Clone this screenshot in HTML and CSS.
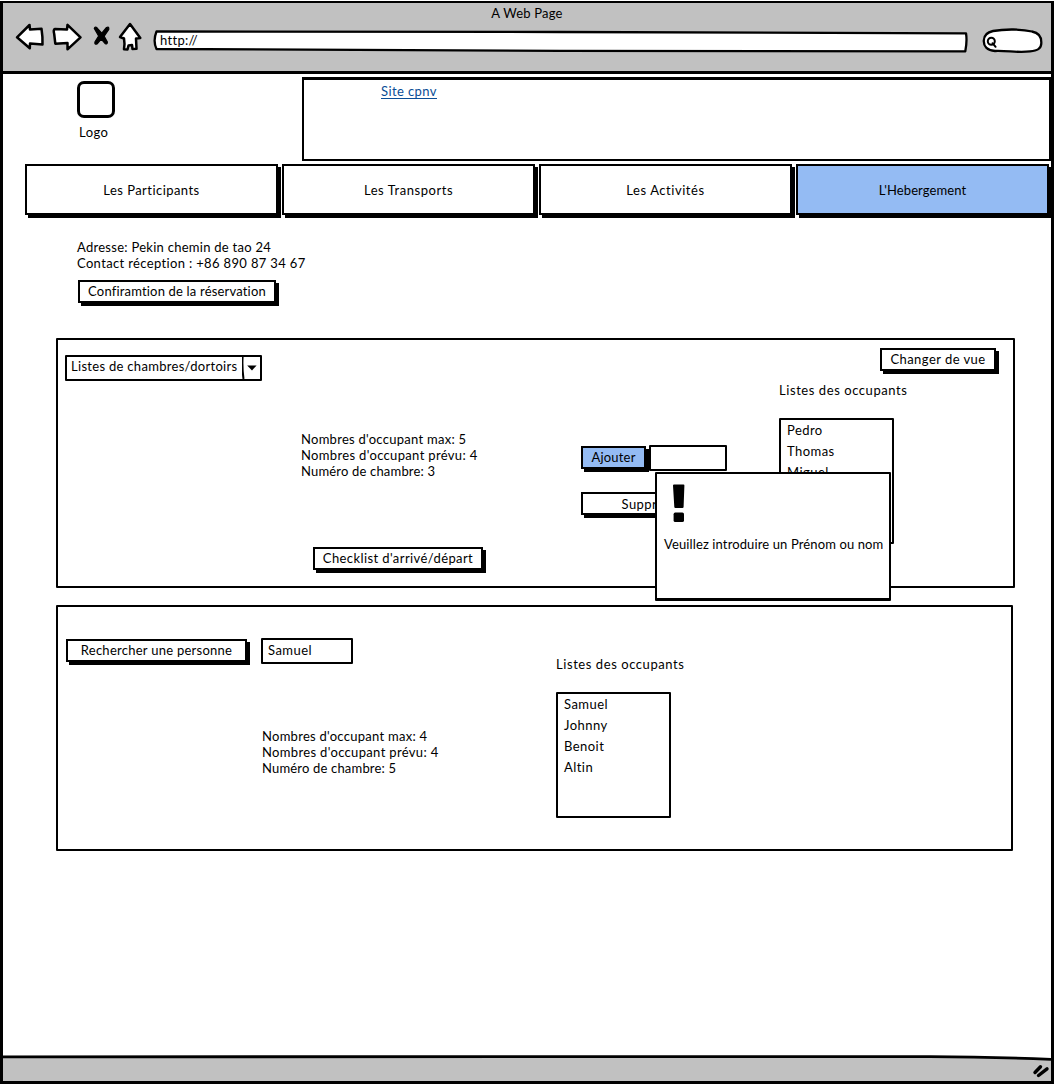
FILE: index.html
```html
<!DOCTYPE html>
<html lang="fr">
<head>
<meta charset="utf-8">
<title>A Web Page</title>
<link rel="stylesheet" href="styles.css">
</head>
<body>
<div class="window">
  <header class="chrome">
    <div class="chrome-title">A Web Page</div>
    <div class="chrome-bar">
      <svg class="nav-icons" width="130" height="32" viewBox="14 21 130 32" fill="#fff" stroke="#000" stroke-width="2.5" stroke-linejoin="round" stroke-linecap="round">
        <path d="M17 37.3 L29.5 25 L30 29.5 L41.5 28.7 Q42.8 37 42.5 44.5 L30 43.5 L29.8 48.3 Z"/>
        <path d="M80.5 37.3 L67.5 24.8 L67 29.5 L55 29 Q53 29.5 54.2 34 L55.3 43.7 L67.5 43 L67.5 49.3 Z"/>
        <path d="M130 24 L120 37 L124 38.5 Q125 44 124 49.3 L127.5 49.4 L128.5 45.5 L132 45 L132.5 49 L136.5 48.8 L136 38.5 L140.3 38 Z"/>
        <path d="M94.3 28.5 Q95 26 97.4 28.3 L101.8 33.2 L106.5 27.5 Q109.2 26 108.8 29.3 L104.2 36.2 L107.4 42 Q107.3 45 105 43.4 L101.2 39 L97.4 43.6 Q94.4 45.2 94.9 42 L98.6 36 Z" fill="#000" stroke-width="1.2"/>
      </svg>
      <div class="address">
        <svg class="address-frame" width="816" height="24" viewBox="153 29 816 24" fill="#fff" stroke="#000" stroke-width="2.3" stroke-linejoin="round">
          <path d="M156.5 31.5 L560 32 L966 33.3 Q967.3 41 965.3 51.3 L560 50.8 L156.5 49 Q152.7 41 156.5 31.5 Z"/>
        </svg>
        <span class="address-text">http://</span>
      </div>
      <svg class="search" width="62" height="28" viewBox="982 27 62 28" fill="#fff" stroke="#000" stroke-width="2.3" stroke-linecap="round">
        <path d="M993 31 C1005 28.8 1022 29 1032 31.5 C1040 33 1041.5 38 1041.3 43 C1041.5 49 1037 50.5 1030 51.4 C1018 53 1008 50.5 995 51 C987 50.5 983.5 46 983.8 40.5 C984 35 988 32 993 31 Z"/>
        <circle cx="991.3" cy="41.3" r="3.5" stroke-width="2"/>
        <path d="M992.5 43.2 L995.6 46.8" stroke-width="2"/>
      </svg>
    </div>
  </header>

  <main class="page">
    <div class="top">
      <div class="logo">
        <div class="logo-box"></div>
        <span class="t-logo">Logo</span>
      </div>
      <div class="banner"><a class="link">Site cpnv</a></div>
    </div>

    <nav class="tabs">
      <div class="tab">Les Participants</div>
      <div class="tab tab-wide">Les Transports</div>
      <div class="tab tab-wide">Les Activités</div>
      <div class="tab tab-active">L'Hebergement</div>
    </nav>

    <section class="contact">
      <div class="t-address">Adresse: Pekin chemin de tao 24</div>
      <div class="t-phone">Contact réception : +86 890 87 34 67</div>
      <div class="btn btn-confirm">Confiramtion de la réservation</div>
    </section>

    <section class="panel panel-rooms">
      <div class="rooms-left">
        <div class="combo">
          <span class="combo-text">Listes de chambres/dortoirs</span>
          <svg class="combo-arrow" width="18" height="22" viewBox="0 0 18 22"><path d="M.6 0 Q0 11 1.5 22" fill="none" stroke="#000" stroke-width="2"/><path d="M5.2 8.4 L14.6 8.4 L10 13.6 Z"/></svg>
        </div>
        <div class="info info-rooms">
          <div class="t-max">Nombres d'occupant max: 5</div>
          <div class="t-plan">Nombres d'occupant prévu: 4</div>
          <div class="t-num">Numéro de chambre: 3</div>
        </div>
        <div class="btn btn-check">Checklist d'arrivé/départ</div>
      </div>
      <div class="rooms-actions">
        <div class="add-row">
          <div class="btn btn-add">Ajouter</div>
          <div class="field field-add"></div>
        </div>
        <div class="btn btn-remove">Supprimer</div>
      </div>
      <div class="rooms-right">
        <div class="btn btn-view">Changer de vue</div>
        <div class="t-list">Listes des occupants</div>
        <div class="list">
          <div>Pedro</div>
          <div>Thomas</div>
          <div>Miguel</div>
        </div>
      </div>
      <div class="popup">
        <svg class="bang" width="18" height="40" viewBox="0 0 18 40"><path d="M2 1.5 Q2 .5 3 .5 H12.5 Q13.5 .5 13.4 1.5 L12.6 23 Q12.5 24 11.5 24 H4.4 Q3.4 24 3.3 23 Z"/><rect x="2.6" y="28.6" width="10.4" height="9.4" rx="1.6"/></svg>
        <div class="t-popup">Veuillez introduire un Prénom ou nom</div>
      </div>
    </section>

    <section class="panel panel-search">
      <div class="search-left">
        <div class="search-row">
          <div class="btn btn-search">Rechercher une personne</div>
          <div class="field field-name">Samuel</div>
        </div>
        <div class="info info-search">
          <div class="t-max">Nombres d'occupant max: 4</div>
          <div class="t-plan">Nombres d'occupant prévu: 4</div>
          <div class="t-num">Numéro de chambre: 5</div>
        </div>
      </div>
      <div class="search-right">
        <div class="t-list">Listes des occupants</div>
        <div class="list">
          <div>Samuel</div>
          <div>Johnny</div>
          <div>Benoit</div>
          <div>Altin</div>
        </div>
      </div>
    </section>
  </main>

  <footer class="status">
    <svg width="1048" height="27" viewBox="3 1055 1048 27">
      <path d="M3 1057.8 L930 1057.6 Q990 1058 1051 1060.3 V1082 H3 Z" fill="#c1c1c1"/>
      <path d="M3 1057.8 L930 1057.6 Q990 1058 1051 1060.3" fill="none" stroke="#000" stroke-width="2.8"/>
      <path d="M1035 1073.5 L1040.5 1067.8 M1038.5 1076.5 L1047 1069.8" stroke="#000" stroke-width="3.4" stroke-linecap="round"/>
    </svg>
  </footer>
</div>
</body>
</html>
```
FILE: styles.css
```css
* { box-sizing: border-box; }

body {
  margin: 0;
  background: #fff;
  color: #000;
  font: 13px/16px Lato, "Liberation Sans", sans-serif;
  letter-spacing: 0.45px;
  white-space: nowrap;
}

.window {
  display: flex;
  flex-direction: column;
  width: 1054px;
  height: 1083px;
  margin-top: 1px;
  border: 3px solid #000;
  border-top-width: 2px;
}

/* browser chrome */
.chrome {
  height: 71px;
  padding-top: 2px;
  background: #c1c1c1;
  border-bottom: 3px solid #000;
}
.chrome-title { text-align: center; letter-spacing: 0.2px; }
.chrome-bar { display: flex; align-items: flex-start; padding-left: 11px; }
.nav-icons { display: block; }
.address { display: grid; width: 816px; margin: 8px 0 0 9px; }
.address-frame { grid-area: 1 / 1; display: block; }
.address-text { grid-area: 1 / 1; padding: 3px 0 0 7px; letter-spacing: 0.3px; }
.search { display: block; margin: 6px 0 0 13px; }

.page { flex: 1; min-height: 0; }

/* logo and banner */
.top { display: flex; height: 90px; padding-top: 3px; }
.logo { width: 299px; padding: 4px 0 0 74px; }
.logo-box {
  width: 38px;
  height: 37px;
  margin-bottom: 6px;
  border: 3px solid #000;
  border-radius: 7px;
}
.t-logo { margin-left: 2px; }
.banner {
  flex: 1;
  height: 84px;
  padding: 4px 0 0 77px;
  border: 2px solid #000;
  border-top-width: 3px;
  padding-top: 3px;
}
.link {
  display: inline-block;
  height: 16px;
  color: #0a4d96;
  border-bottom: 1px solid #0a4d96;
  letter-spacing: 0.4px;
}

/* navigation */
.tabs { display: flex; gap: 4px; width: 1052px; padding-left: 22px; }
.tab {
  width: 253px;
  height: 51px;
  padding-top: 16px;
  text-align: center;
  background: #fff;
  border: 2px solid #000;
  box-shadow: 3px 3px 0 #000;
}
.tab-wide { letter-spacing: 0.55px; }
.tab-active { background: #94bbf3; letter-spacing: 0.1px; }

/* shared controls */
.btn {
  height: 23px;
  padding-top: 1px;
  text-align: center;
  background: #fff;
  border: 2px solid #000;
  box-shadow: 3px 3px 0 #000;
}
.field {
  height: 26px;
  padding: 2px 0 0 5px;
  background: #fff;
  border: 2px solid #000;
  border-radius: 1px;
}
.list {
  width: 115px;
  height: 126px;
  padding-left: 6px;
  line-height: 21px;
  border: 2px solid #000;
  border-radius: 1px;
}

.t-max { letter-spacing: 0.27px; }
.t-plan { letter-spacing: 0.34px; }
.t-num { letter-spacing: 0.18px; }
.t-list { letter-spacing: 0.57px; }

.contact { padding: 24px 0 0 74px; }
.t-address { letter-spacing: 0.27px; }
.t-phone { letter-spacing: 0.35px; }
.btn-confirm { width: 198px; margin: 9px 0 0 1px; letter-spacing: 0.18px; }

.panel { display: flex; position: relative; border: 2px solid #000; border-radius: 1px; }

/* rooms panel */
.panel-rooms { width: 959px; height: 250px; margin: 35px 0 0 53px; }
.rooms-left { width: 523px; padding: 15px 0 0 7px; }
.combo {
  display: flex;
  justify-content: space-between;
  width: 197px;
  height: 26px;
  padding-left: 4px;
  border: 2px solid #000;
  border-radius: 1px;
}
.combo-text { padding-top: 1px; letter-spacing: 0.3px; }
.info-rooms { margin: 50px 0 0 236px; }
.btn-check { width: 170px; margin: 68px 0 0 248px; letter-spacing: 0.41px; }
.rooms-actions { width: 198px; padding-top: 105px; }
.add-row { display: flex; gap: 3px; }
.btn-add { width: 65px; margin-top: 1px; background: #94bbf3; letter-spacing: 0.2px; }
.field-add { width: 78px; }
.btn-remove { width: 144px; margin-top: 21px; padding-top: 2px; }
.rooms-right { flex: 1; padding-top: 8px; }
.btn-view { width: 116px; margin-left: 101px; }
.rooms-right .t-list { margin: 11px 0 20px; }

/* message shown over the rooms panel */
.popup {
  position: absolute;
  left: 597px;
  top: 132px;
  width: 236px;
  height: 129px;
  padding: 10px 0 0 7px;
  background: #fff;
  border: 2px solid #000;
  border-bottom-width: 3px;
  border-radius: 1px;
}
.bang { display: block; margin-left: 7px; }
.t-popup { margin-top: 12px; letter-spacing: 0.12px; }

/* person search panel */
.panel-search { width: 957px; height: 246px; margin: 17px 0 0 53px; }
.search-left { width: 498px; padding: 31px 0 0 8px; }
.search-row { display: flex; gap: 14px; }
.btn-search { width: 181px; margin-top: 1px; letter-spacing: 0.26px; }
.field-name { width: 92px; }
.info-search { margin: 64px 0 0 196px; }
.search-right { padding-top: 49px; }
.search-right .list { margin-top: 20px; }

.status { height: 27px; margin-top: -1px; }
.status svg { display: block; }
```
